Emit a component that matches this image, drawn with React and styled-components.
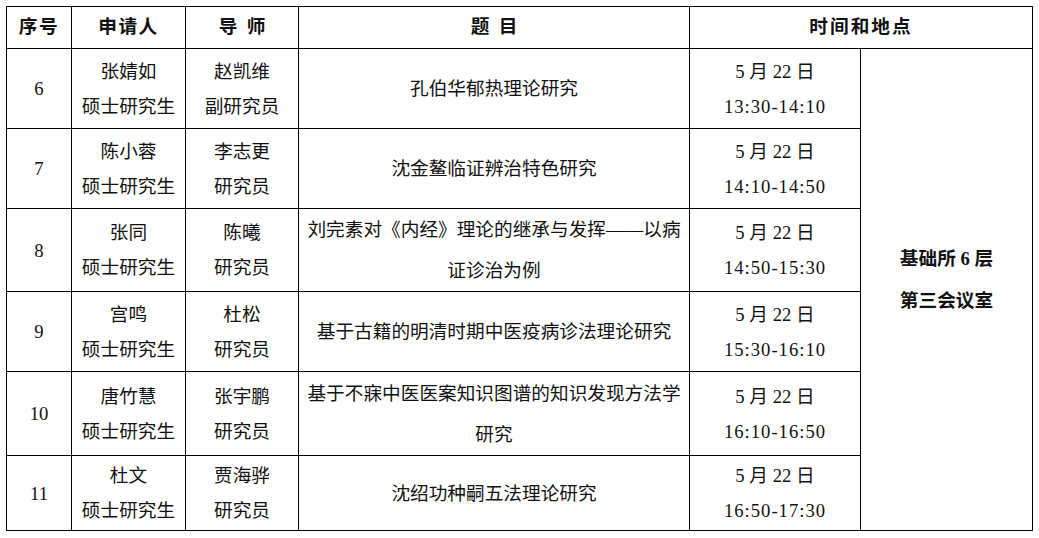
import React from 'react';
import styled, { createGlobalStyle } from 'styled-components';

const GlobalStyle = createGlobalStyle`
  body {
    margin: 0;
    background: #fff;
    font-family: "Liberation Serif", "Noto Sans CJK SC", serif;
    color: #111;
  }
`

const Page = styled.div`
  padding: 6px 0 0 6px;
`

const Table = styled.table`
  border-collapse: collapse;
  table-layout: fixed;
  width: 1027px;
  font-size: 18.67px;
`

const Head = styled.th`
  height: 41px;
  padding: 0;
  border: 1px solid #000;
  font-weight: bold;
  letter-spacing: ${props => props.$spacing || '1.5px'};
  line-height: 1;
  text-align: center;
  vertical-align: middle;
`

const Row = styled.tr`
  height: ${props => props.$h}px;
`

const Cell = styled.td`
  padding: 0 4px;
  border: 1px solid #000;
  text-align: center;
  vertical-align: middle;
  line-height: ${props => props.$lh || 35}px;
  white-space: nowrap;
`

const Place = styled(Cell)`
  font-weight: bold;
  line-height: 42px;
  padding-bottom: 20px;
`

const Time = styled.span`
  letter-spacing: 1px;
`

const rows = [
  {
    no: 6, h: 80, name: '张婧如', teacher: '赵凯维', rank: '副研究员',
    title: ['孔伯华郁热理论研究'], time: '13:30-14:10',
  },
  {
    no: 7, h: 80, name: '陈小蓉', teacher: '李志更', rank: '研究员',
    title: ['沈金鳌临证辨治特色研究'], time: '14:10-14:50',
  },
  {
    no: 8, h: 83, name: '张同', teacher: '陈曦', rank: '研究员',
    title: ['刘完素对《内经》理论的继承与发挥——以病', '证诊治为例'], time: '14:50-15:30',
  },
  {
    no: 9, h: 80, name: '宫鸣', teacher: '杜松', rank: '研究员',
    title: ['基于古籍的明清时期中医疫病诊法理论研究'], time: '15:30-16:10',
  },
  {
    no: 10, h: 84, name: '唐竹慧', teacher: '张宇鹏', rank: '研究员',
    title: ['基于不寐中医医案知识图谱的知识发现方法学', '研究'], time: '16:10-16:50',
  },
  {
    no: 11, h: 75, name: '杜文', teacher: '贾海骅', rank: '研究员',
    title: ['沈绍功种嗣五法理论研究'], time: '16:50-17:30',
  },
]

const Lines = ({ items }) => items.map((t, i) => <React.Fragment key={i}>
  {i > 0 && <br />}
  {t}
</React.Fragment>)

const App = () => {
  return (
    <Page>
      <GlobalStyle />
      <Table>
        <colgroup>
          <col style={{ width: 65 }} />
          <col style={{ width: 114 }} />
          <col style={{ width: 113 }} />
          <col style={{ width: 391 }} />
          <col style={{ width: 171 }} />
          <col style={{ width: 172 }} />
        </colgroup>
        <thead>
          <tr>
            <Head>序号</Head>
            <Head>申请人</Head>
            <Head $spacing="0">导&nbsp;&nbsp;师</Head>
            <Head $spacing="0">题&nbsp;&nbsp;目</Head>
            <Head colSpan={2} $spacing="2px">时间和地点</Head>
          </tr>
        </thead>
        <tbody>
          {rows.map((item, index) => <Row key={item.no} $h={item.h}>
            <Cell>{item.no}</Cell>
            <Cell><Lines items={[item.name, '硕士研究生']} /></Cell>
            <Cell><Lines items={[item.teacher, item.rank]} /></Cell>
            <Cell $lh={41}><Lines items={item.title} /></Cell>
            <Cell>5&nbsp;月 22&nbsp;日<br /><Time>{item.time}</Time></Cell>
            {index === 0 && <Place rowSpan={6}>基础所 6 层<br />第三会议室</Place>}
          </Row>)}
        </tbody>
      </Table>
    </Page>
  );
}

export default App;
